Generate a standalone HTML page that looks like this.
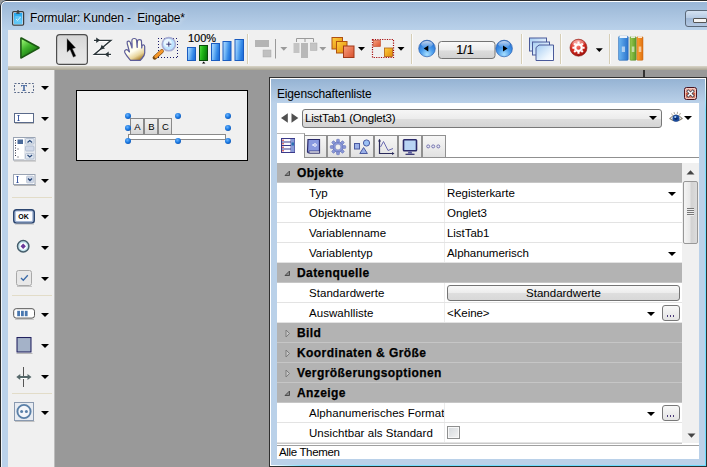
<!DOCTYPE html>
<html>
<head>
<meta charset="utf-8">
<title>Formular</title>
<style>
*{box-sizing:border-box;margin:0;padding:0}
html,body{width:707px;height:467px;overflow:hidden;background:#999;font-family:"Liberation Sans",sans-serif;font-size:12px;color:#000}
.abs{position:absolute}
#win{position:absolute;left:0;top:0;width:720px;height:480px;background:#bbd2ea;overflow:hidden;border-top-left-radius:6px}
#winb{position:absolute;left:0;top:0;width:720px;height:480px;border:1px solid #2a2a2a;border-top-left-radius:6px;box-shadow:inset 0 1px 0 #ffffff,inset 1px 0 0 #f0f5fa;z-index:5}
#titlebar{position:absolute;left:0;top:0;width:707px;height:30px;background:linear-gradient(#97b4d5 0,#a4bfdc 35%,#b0c9e4 70%,#b9d1ea 100%)}
#tb{position:absolute;left:8px;top:30px;width:699px;height:36px;background:#f0f0f0}
#tbshadow{position:absolute;left:8px;top:66px;width:699px;height:4px;background:linear-gradient(#d9d5c8,#a9a595)}
#ltb{position:absolute;left:8px;top:70px;width:46px;height:397px;background:#f0f0f0}
#ltbedge{position:absolute;left:54px;top:70px;width:2px;height:397px;background:linear-gradient(90deg,#bcbcbc 50%,#8e8e8e 50%)}
#canvas{position:absolute;left:55px;top:70px;width:652px;height:397px;background:#999}
.tri{position:absolute;width:0;height:0;border-left:4px solid transparent;border-right:4px solid transparent;border-top:4px solid #000}
.tris{position:absolute;width:0;height:0;border-left:4.1px solid transparent;border-right:4.1px solid transparent;border-top:4.5px solid #000}
.vsep{position:absolute;top:34px;width:2px;height:30px;background:linear-gradient(90deg,#d6ceb6 50%,#fbfbfb 50%)}
.hsep{position:absolute;left:12px;width:40px;height:1px;background:#e2dcc8}
/* panel */
#panel{position:absolute;left:269px;top:77px;width:438px;height:390px;background:#303030;}
#panel .in{position:absolute;left:1px;top:1px;right:1px;bottom:1px;background:#fff}
#panel .blue{position:absolute;left:2px;top:2px;right:2px;bottom:2px;background:#bad1e9}
#ptitle{position:absolute;left:2px;top:2px;right:2px;height:24px;background:linear-gradient(#95b3d3,#a8c2de 50%,#bad1e9)}
#pcontent{position:absolute;left:8px;top:26px;width:422px;height:356px;background:#fff}
.hdr{position:absolute;left:0;width:405px;height:20px;background:#b3b3b3;border-bottom:1px solid #c6c6c6;font-weight:bold;font-size:12px;line-height:21px;padding-left:20px;letter-spacing:0.42px;-webkit-text-stroke:0.25px #000}
.row{position:absolute;left:0;width:405px;height:20px;border-bottom:1px solid #e3e3e3;background:#fff;line-height:19px;font-size:11.5px}
.row .l{position:absolute;left:32px;top:1px;white-space:nowrap;letter-spacing:0.05px}
.row .v{position:absolute;left:170px;top:1px;white-space:nowrap;letter-spacing:-0.05px}
.row .vs{position:absolute;left:167px;top:0;width:1px;height:19px;background:#ececec}

.dots{position:absolute;left:385px;top:2px;width:18px;height:16px;border:1px solid #787878;border-radius:3px;background:linear-gradient(#f8f8f8,#e4e4e4)}
.dots i{position:absolute;top:9.400px;width:1.300px;height:1.400px;background:#4a3a7a}
.dots i:nth-child(1){left:4px}.dots i:nth-child(2){left:7px}.dots i:nth-child(3){left:10px}
.sbtn{position:absolute;left:170px;top:2px;width:233px;height:16px;border:1px solid #747474;border-radius:3px;background:linear-gradient(#f8f8f8,#ececec 50%,#dedede 52%,#d8d8d8);text-align:center;line-height:14px;font-size:11.5px}
.cbx{position:absolute;left:170px;top:3px;width:13px;height:13px;border:1px solid #8e8f8f;background:linear-gradient(135deg,#d4d8dc,#f4f4f4);box-shadow:inset 0 0 0 1px #f8f8f8}
</style>
</head>
<body>
<div id="win">
  <div id="titlebar"></div>
  <div id="winb"></div>
  
  <!-- title icon -->
  <svg class="abs" style="left:11px;top:9px" width="15" height="18" viewBox="11 9 15 18">
    <defs><linearGradient id="clipb" x1="0" y1="0" x2="0" y2="1"><stop offset="0" stop-color="#22a4ec"/><stop offset="1" stop-color="#66ccf8"/></linearGradient></defs>
    <rect x="12.600" y="11.600" width="11" height="13.600" rx="1.200" fill="#cfe0f2" stroke="#3c3c3c" stroke-width="1.200"/>
    <rect x="14" y="13" width="8.300" height="11.200" fill="url(#clipb)"/>
    <rect x="15.200" y="16" width="5.800" height="6" fill="#7ad0f8" opacity="0.6"/>
    <path d="M17.300 10h1.400v2.600h1v1.200h-3.400v-1.200h1z" fill="#3c3c3c"/>
    <path d="M16 19l1.500 1.500L20.500 17" stroke="#d8f0fc" fill="none" stroke-width="0.900"/>
  </svg>
  <div class="abs" id="ttext" style="left:30px;top:10px;font-size:12px;line-height:16px;white-space:nowrap;letter-spacing:-0.14px;text-shadow:0 0 5px rgba(255,255,255,0.8),0 0 8px rgba(255,255,255,0.5)">Formular: Kunden -&nbsp; Eingabe*</div>
  <!-- minimize btn -->
  <div class="abs" style="left:685px;top:10px;width:30px;height:17px;border:1px solid #5a6878;border-radius:3px;background:linear-gradient(#d4e2f2,#b8cce4 45%,#9fb8d6 50%,#b4c8e2)"></div>
  <div class="abs" style="left:693px;top:18px;width:14px;height:5px;border:1px solid #555;background:#f4f4f4;border-radius:1px"></div>

  <div id="tb"></div>
  <div id="tbshadow"></div>
  <div id="ltb"></div>
  <div id="ltbedge"></div>
  <div id="canvas"></div>
  <div class="abs" style="left:643px;top:70px;width:2px;height:8px;background:#333"></div>

  <!-- TOP TOOLBAR ICONS -->
  <div id="topicons">
<svg class="abs" style="left:0;top:30px" width="707" height="40" viewBox="0 30 707 40">
<defs>
<linearGradient id="gplay" x1="0" y1="0.1" x2="0.6" y2="1"><stop offset="0" stop-color="#90f06c"/><stop offset="0.45" stop-color="#40b42c"/><stop offset="1" stop-color="#14700c"/></linearGradient>
<linearGradient id="gbar" x1="0" y1="0" x2="1" y2="0.3"><stop offset="0" stop-color="#b8e0ff"/><stop offset="0.4" stop-color="#78baf8"/><stop offset="0.75" stop-color="#3a8ee8"/><stop offset="1" stop-color="#2474dc"/></linearGradient>
<linearGradient id="gbarg" x1="0" y1="0" x2="1" y2="0.3"><stop offset="0" stop-color="#5ce048"/><stop offset="0.45" stop-color="#22b818"/><stop offset="1" stop-color="#0a800a"/></linearGradient>
<radialGradient id="gball" cx="0.5" cy="0.85" r="0.85"><stop offset="0" stop-color="#a8e0ff"/><stop offset="0.45" stop-color="#4a9cec"/><stop offset="0.8" stop-color="#2a78d8"/><stop offset="1" stop-color="#1a58b0"/></radialGradient><linearGradient id="gloss" x1="0" y1="0" x2="0" y2="1"><stop offset="0" stop-color="#fff" stop-opacity="0.75"/><stop offset="1" stop-color="#fff" stop-opacity="0.05"/></linearGradient>
<radialGradient id="gred" cx="0.4" cy="0.3" r="0.8"><stop offset="0" stop-color="#ff9a90"/><stop offset="0.5" stop-color="#d82a20"/><stop offset="1" stop-color="#8a0a08"/></radialGradient>
<linearGradient id="gor" x1="0" y1="0" x2="1" y2="1"><stop offset="0" stop-color="#ffd040"/><stop offset="1" stop-color="#e08808"/></linearGradient>
<linearGradient id="gor2" x1="0" y1="0" x2="1" y2="1"><stop offset="0" stop-color="#f8a080"/><stop offset="1" stop-color="#d8502c"/></linearGradient>
<linearGradient id="gwin" x1="0" y1="0" x2="1" y2="1"><stop offset="0" stop-color="#a4ccf2"/><stop offset="0.7" stop-color="#eef6fe"/><stop offset="1" stop-color="#ffffff"/></linearGradient>
<linearGradient id="gbtn" x1="0" y1="0" x2="0" y2="1"><stop offset="0" stop-color="#d6d6d6"/><stop offset="0.45" stop-color="#e0e0e0"/><stop offset="0.5" stop-color="#e2e2e2"/><stop offset="1" stop-color="#e8e8e8"/></linearGradient>
<linearGradient id="gpg" x1="0" y1="0" x2="0" y2="1"><stop offset="0" stop-color="#fafafa"/><stop offset="0.5" stop-color="#ececec"/><stop offset="0.55" stop-color="#dcdcdc"/><stop offset="1" stop-color="#d0d0d0"/></linearGradient>
<linearGradient id="ghand" x1="0.2" y1="0" x2="0.7" y2="1"><stop offset="0" stop-color="#ffffe8"/><stop offset="0.55" stop-color="#fffef0"/><stop offset="0.8" stop-color="#e8d49a"/><stop offset="1" stop-color="#a87c28"/></linearGradient>
<linearGradient id="gbk1" x1="0" y1="0" x2="1" y2="0"><stop offset="0" stop-color="#6cb6f2"/><stop offset="1" stop-color="#2a72cc"/></linearGradient><linearGradient id="gbk2" x1="0" y1="0" x2="1" y2="0"><stop offset="0" stop-color="#9ccc50"/><stop offset="1" stop-color="#5c9828"/></linearGradient><linearGradient id="gbk3" x1="0" y1="0" x2="1" y2="0"><stop offset="0" stop-color="#fca030"/><stop offset="1" stop-color="#e07010"/></linearGradient>
</defs>
<!-- play -->
<path d="M21.200 38.300L38.700 47.700L21.200 57.600z" fill="url(#gplay)" stroke="#1c5a14" stroke-width="2.200" stroke-linejoin="round"/>
<path d="M21.700 39.200L37.600 47.700L21.700 56.700z" fill="url(#gplay)"/>
<!-- selected btn -->
<rect x="56.600" y="34.600" width="30.800" height="29.800" rx="3.200" fill="url(#gbtn)" stroke="#4e4e4e" stroke-width="1.200"/>
<path d="M67 38.600L67 52.200L70 49.600L73.300 57.200L75.900 56L72.500 48.700L75.600 47.800Z" fill="#000" stroke="#777" stroke-width="0.400"/>
<!-- Z -->
<g stroke="#fff" stroke-width="3.200" fill="none" opacity="0.85" stroke-linejoin="round"><path d="M94 40.300h17L94.300 54.400H111"/></g>
<g stroke="#2a3438" stroke-width="1.300" fill="none"><path d="M94 40.300h17L94.300 54.400H111"/></g>
<path d="M96.200 37.500l3.900 2.800-3.900 2.800zM108.700 51.600l-3.900 2.800 3.900 2.800zM99.900 49.700L105 48.600L101.700 44.800Z" fill="#2a3438"/>
<!-- hand -->
<path d="M130.500 60.300L140.300 60.300C142 58 144.700 56.500 144.700 53L144.700 46.500C144.700 44.500 142.300 44.500 142 46L141.700 48L141.500 41.500C141.500 39 137.500 39 137.400 41.500L137.200 47.500L136.600 40.500C136.500 37.800 132 37.800 131.900 40.500L132 48L130.300 42.500C129.500 40 126.500 41 127.200 43.500L129.500 52L128 50.300C126.500 48.800 123.800 50 124.800 52.500C126 55 128.500 58 130.500 60.300Z" fill="url(#ghand)" stroke="#5c5c98" stroke-width="1.200" stroke-linejoin="round"/>
<path d="M132 47.500v-4M137.200 47v-4M141.700 47.500v-2" stroke="#7a7ab0" stroke-width="0.800" fill="none"/>
<!-- magnifier -->
<path d="M158 38.500H178M158 57.500H178" stroke="#1a1a6a" stroke-width="1" stroke-dasharray="1 2" fill="none"/><path d="M158.500 41V57M177.500 41V57" stroke="#1a1a6a" stroke-width="1" stroke-dasharray="1 2" fill="none"/>
<path d="M154.600 57.700l7.200-6.500" stroke="#7a4a10" stroke-width="4" stroke-linecap="round"/>
<path d="M155.800 56.600l6-5.400" stroke="#f4962a" stroke-width="3" stroke-linecap="round"/>
<circle cx="168.800" cy="44.200" r="6.600" fill="#bfe4ff" stroke="#a8aed4" stroke-width="1.600"/>
<circle cx="167.800" cy="43" r="4" fill="#f0f9ff" opacity="0.85"/>
<path d="M166.300 44.200h5M168.800 41.700v5" stroke="#2a2a6a" stroke-width="0.900"/>
<!-- bars -->
<rect x="187.500" y="47.500" width="8" height="13" fill="url(#gbar)" stroke="#1a5cc0"/>
<rect x="199.500" y="45.500" width="8" height="15" fill="url(#gbarg)" stroke="#0a4a0a"/>
<rect x="211.500" y="43.500" width="8" height="17" fill="url(#gbar)" stroke="#1a5cc0"/>
<rect x="223" y="41.500" width="8" height="19" fill="url(#gbar)" stroke="#1a5cc0"/>
<rect x="235" y="39.500" width="8.500" height="21" fill="url(#gbar)" stroke="#1a5cc0"/>
<path d="M202 63.500l1.700-2 1.700 2z" fill="#000"/>
<!-- gray icon1 -->
<rect x="255" y="40" width="14" height="7" fill="#b4b4b4"/><rect x="263" y="50" width="8" height="7" fill="#c0c0c0" stroke="#aaa" stroke-width="0.5"/>
<path d="M275.500 39v19.500" stroke="#9a9a9a" stroke-width="1"/>
<path d="M280.300 47h7l-3.500 3.800z" fill="#9a9a9a"/>
<!-- gray icon2 -->
<path d="M296.500 42v-3.500h17V42M305 38.500V42" stroke="#9a9a9a" fill="none"/>
<rect x="293.500" y="43" width="6" height="10" fill="#c4c4c4"/><rect x="301" y="43" width="7" height="15" fill="#b8b8b8"/><rect x="310.500" y="43" width="6.500" height="7.500" fill="#c4c4c4" stroke="#aaa" stroke-width="0.5"/>
<path d="M319.300 47h7l-3.500 3.800z" fill="#9a9a9a"/>
<!-- orange stack -->
<rect x="332" y="37.500" width="10.500" height="11.500" fill="url(#gor)" stroke="#b05010"/>
<rect x="336.500" y="41.500" width="10.500" height="11.500" fill="url(#gor)" stroke="#b05010"/>
<rect x="343.500" y="46" width="10.500" height="11.500" fill="url(#gor2)" stroke="#a03818"/>
<path d="M358 47h7l-3.500 3.800z" fill="#000"/>
<!-- dotted rect -->
<rect x="372.500" y="39.500" width="21" height="18" fill="none" stroke="#a80c0c" stroke-width="1.200" stroke-dasharray="1.200 1.200"/>
<rect x="373.500" y="40.500" width="7" height="6" fill="url(#gor2)" stroke="#c04828" stroke-width="0.6"/>
<rect x="384.500" y="48" width="8" height="8.500" fill="url(#gor)" stroke="#b06010" stroke-width="0.8"/>
<path d="M397.500 47h7l-3.500 3.800z" fill="#000"/>
<!-- nav -->
<circle cx="427" cy="48.500" r="8.300" fill="url(#gball)" stroke="#2a60b0" stroke-width="0.700"/>
<ellipse cx="427" cy="44.300" rx="5.800" ry="3.300" fill="url(#gloss)"/>
<path d="M428.300 45.500v6l-4.600-3z" fill="#000"/>
<rect x="438.500" y="41.500" width="56.500" height="17" rx="3" fill="url(#gpg)" stroke="#747474"/>
<circle cx="504.100" cy="48.500" r="8.300" fill="url(#gball)" stroke="#2a60b0" stroke-width="0.700"/>
<ellipse cx="504.100" cy="44.300" rx="5.800" ry="3.300" fill="url(#gloss)"/>
<path d="M503 45.500v6l4.600-3z" fill="#000"/>
<!-- windows -->
<rect x="529.500" y="38" width="17" height="13" fill="url(#gwin)" stroke="#4a5a9a"/>
<rect x="532.500" y="42" width="17" height="13" fill="url(#gwin)" stroke="#4a5a9a"/>
<path d="M536 47.500l3-2.500h14.500v15.500H536z" fill="url(#gwin)" stroke="#4a5a9a"/>
<!-- gear -->
<circle cx="578.500" cy="47.700" r="8.500" fill="url(#gred)" stroke="#8a1a10" stroke-width="0.600"/>
<ellipse cx="578.500" cy="43.300" rx="6" ry="3.300" fill="url(#gloss)" opacity="0.6"/>
<circle cx="578.500" cy="47.700" r="3.300" fill="none" stroke="#fff" stroke-width="2.300"/>
<path d="M582.70 47.70L584.60 47.70M581.47 50.67L582.81 52.01M578.50 51.90L578.50 53.80M575.53 50.67L574.19 52.01M574.30 47.70L572.40 47.70M575.53 44.73L574.19 43.39M578.50 43.50L578.50 41.60M581.47 44.73L582.81 43.39" stroke="#fff" stroke-width="2.100"/>
<path d="M595.800 48.300h7l-3.500 3.800z" fill="#000"/>
<!-- books -->
<rect x="618.600" y="36.300" width="9.600" height="24" rx="1" fill="url(#gbk1)" stroke="#2464b4" stroke-width="0.600"/>
<rect x="619.600" y="36" width="7.600" height="2" fill="#eef4fc"/>
<rect x="630" y="36.800" width="6.200" height="23.500" rx="0.800" fill="url(#gbk2)" stroke="#4c8420" stroke-width="0.500"/>
<rect x="636.900" y="36.800" width="6.100" height="23.500" rx="0.800" fill="url(#gbk3)" stroke="#c46410" stroke-width="0.500"/>
<rect x="631" y="36.300" width="4.200" height="1.600" fill="#f0f4e8"/><rect x="637.900" y="36.300" width="4.100" height="1.600" fill="#fcf0e4"/>
<path d="M621.800 46.500h3.200v5.500h-3.200zM631.800 46.500h2.600v5.500h-2.600zM638.700 46.500h2.600v5.500h-2.600z" fill="#fff" opacity="0.55"/>
</svg>
<div class="vsep" style="left:247px"></div>
<div class="vsep" style="left:411px"></div>
<div class="vsep" style="left:521px"></div>
<div class="vsep" style="left:560px"></div>
<div class="vsep" style="left:609px"></div>
<div class="abs" style="left:188px;top:32px;font-size:11px;line-height:12px;letter-spacing:0px;white-space:nowrap;-webkit-text-stroke:0.15px #000" id="pct">100%</div>
<div class="abs" style="left:437px;top:42px;width:56px;text-align:center;font-size:12.5px;line-height:16px;-webkit-text-stroke:0.2px #000">1/1</div>
</div><!--/top-->

  <!-- LEFT TOOLBAR ICONS -->
  <div id="lefticons">
<svg class="abs" style="left:8px;top:70px" width="46" height="397" viewBox="8 70 46 397">
<defs>
<linearGradient id="lgb" x1="0" y1="0" x2="0" y2="1"><stop offset="0" stop-color="#ffffff"/><stop offset="1" stop-color="#dfe4ec"/></linearGradient>
<radialGradient id="lrad" cx="0.5" cy="0.5" r="0.5"><stop offset="0" stop-color="#fff"/><stop offset="0.6" stop-color="#e0e6ee"/><stop offset="1" stop-color="#8a9ab0"/></radialGradient>
</defs>
<!-- 1 static text -->
<rect x="14.500" y="83.500" width="19" height="9" fill="none" stroke="#5a6a8a" stroke-width="1" stroke-dasharray="2 1.500"/>
<path d="M21 85h6v1.500h-.8l-.4-.7h-1v4.400h.9v.8h-3.400v-.8h.9v-4.400h-1l-.4.700H21z" fill="#4a6aa0"/>
<!-- 2 entry -->
<rect x="14.500" y="113.500" width="19" height="9" fill="#fff" stroke="#5a6a8a" stroke-width="1"/>
<path d="M15 123.500h19" stroke="#b8b8b8" stroke-width="1"/>
<path d="M17.500 115.500h2M17.500 120.500h2M18.500 115.500v5" stroke="#2a4a9a" stroke-width="0.9" fill="none"/>
<!-- 3 listbox -->
<rect x="13.500" y="137.500" width="21.500" height="22.500" fill="#fff" stroke="#9aa4b4" stroke-width="1"/>
<path d="M14 161h22" stroke="#b4b4b4"/>
<rect x="24" y="138" width="11" height="22" fill="#e4e8ee"/>
<rect x="17.500" y="139.500" width="5.500" height="4.500" fill="#4a6a9a"/>
<path d="M15.500 140v17.500" stroke="#334" stroke-width="1" stroke-dasharray="1 1.500"/>
<path d="M17.500 149h1M17.500 157h1" stroke="#334"/>
<rect x="25.500" y="138.500" width="8.500" height="5.500" rx="1" fill="#dfe6f0" stroke="#a8b4c8" stroke-width="0.7"/>
<rect x="25.500" y="146" width="8.500" height="5" rx="1" fill="#d0d8e8" stroke="#a8b4c8" stroke-width="0.7"/>
<rect x="25.500" y="153.500" width="8.500" height="5.500" rx="1" fill="#dfe6f0" stroke="#a8b4c8" stroke-width="0.7"/>
<path d="M27.500 142.500l2.300-2 2.300 2M27.500 155l2.300 2 2.300-2" stroke="#2a4a7a" stroke-width="1.200" fill="none"/>
<!-- 4 combo -->
<rect x="13.500" y="174.500" width="21.500" height="10" fill="#fff" stroke="#9aa4b4" stroke-width="1"/>
<path d="M14 185.500h22" stroke="#b4b4b4"/>
<path d="M16.500 176.500h2M16.500 182.500h2M17.500 176.500v6" stroke="#2a4a9a" stroke-width="0.9" fill="none"/>
<rect x="26.500" y="176" width="7" height="7" rx="1" fill="#d0d8e8" stroke="#b0bccc" stroke-width="0.6"/>
<path d="M28 178.500l2 2 2-2" stroke="#2a4a7a" stroke-width="1.300" fill="none"/>
<!-- 5 OK -->
<rect x="13.700" y="209.700" width="20.600" height="13.400" rx="2.800" fill="#a4b6d4" stroke="#2c4670" stroke-width="1.400"/>
<rect x="15.800" y="211.600" width="16.400" height="9.400" rx="0.800" fill="#fbfcfe"/>
<path d="M15 224.300h19" stroke="#cccccc"/>
<!-- 6 radio -->
<circle cx="23.200" cy="246.200" r="5.700" fill="#c4e4ee" stroke="#465e6c" stroke-width="1.500"/>
<circle cx="23.200" cy="246.200" r="3.500" fill="#fff"/>
<path d="M23.200 243.500l2.700 2.700-2.700 2.700-2.700-2.700z" fill="#6a3a9a"/>
<!-- 7 checkbox -->
<rect x="16.500" y="270.500" width="15" height="15" rx="2" fill="#e8e8e8" stroke="#a8a8a8" stroke-width="1"/>
<path d="M17 286.500h15" stroke="#c4c4c4"/>
<path d="M21 278l2.300 2.300 4.500-5" stroke="#3a6aa8" stroke-width="1.300" fill="none"/>
<!-- 8 progress -->
<rect x="13.700" y="308.700" width="20.800" height="9.400" rx="2.500" fill="#fff" stroke="#555" stroke-width="1"/>
<path d="M15 319.500h19" stroke="#c8c8c8"/>
<rect x="17.200" y="310.800" width="2.800" height="5.400" fill="#4a78b0"/><rect x="21" y="310.800" width="2.800" height="5.400" fill="#4a78b0"/><rect x="24.800" y="310.800" width="2.800" height="5.400" fill="#4a78b0"/>
<!-- 9 square -->
<rect x="16" y="336.500" width="16" height="16.500" fill="#fff"/>
<rect x="17" y="337.500" width="14" height="14.500" fill="#a4b2c8" stroke="#22225e" stroke-width="1.100"/>
<path d="M16.500 353.500h16" stroke="#b8b8b8"/>
<!-- 10 splitter -->
<path d="M23.500 367v20" stroke="#555" stroke-width="1"/>
<path d="M18.500 378.200h10" stroke="#fff" stroke-width="1.600"/><path d="M18.500 377h10" stroke="#56686a" stroke-width="2"/>
<path d="M16.300 377l4-3v6zM31.500 377l-4-3v6z" fill="#56686a"/>
<!-- 11 plugin -->
<rect x="14.500" y="402.500" width="19" height="18" fill="#e8ecf2" stroke="#8a9ab0" stroke-width="1"/>
<path d="M15 421.500h19.500" stroke="#c0c0c0"/>
<circle cx="24" cy="411.500" r="6.600" fill="#f4f6fa" stroke="#5a80a8" stroke-width="1.900"/>
<circle cx="21.600" cy="411.500" r="1.500" fill="#5a80a8"/><circle cx="26.400" cy="411.500" r="1.500" fill="#5a80a8"/>
</svg>
<div class="abs" style="left:14px;top:210px;width:19px;height:13px;line-height:13px;text-align:center;font-size:7px;font-weight:bold;letter-spacing:0px">OK</div>
<div class="tri" style="left:41px;top:86px"></div>
<div class="tri" style="left:41px;top:117px"></div>
<div class="tri" style="left:41px;top:148px"></div>
<div class="tri" style="left:41px;top:179px"></div>
<div class="tri" style="left:41px;top:215px"></div>
<div class="tri" style="left:41px;top:246px"></div>
<div class="tri" style="left:41px;top:277px"></div>
<div class="tri" style="left:41px;top:313px"></div>
<div class="tri" style="left:41px;top:344px"></div>
<div class="tri" style="left:41px;top:375px"></div>
<div class="tri" style="left:41px;top:411px"></div>
<div class="hsep" style="top:197px"></div>
<div class="hsep" style="top:295px"></div>
<div class="hsep" style="top:393px"></div>
</div><!--/left-->

  <!-- FORM -->
  <div class="abs" style="left:76px;top:90px;width:172px;height:71px;border:1px solid #000;background:#f0f0f0"></div>
  <div id="formobj">
<svg class="abs" style="left:120px;top:110px" width="115" height="36" viewBox="120 110 115 36">
<defs><radialGradient id="hnd" cx="0.4" cy="0.35" r="0.7"><stop offset="0" stop-color="#6ab4ff"/><stop offset="0.6" stop-color="#1a78e0"/><stop offset="1" stop-color="#0a50b0"/></radialGradient>
<linearGradient id="tabg" x1="0" y1="0" x2="0" y2="1"><stop offset="0" stop-color="#f0f0f0"/><stop offset="0.5" stop-color="#e8e8e8"/><stop offset="1" stop-color="#d4d4d4"/></linearGradient></defs>
<rect x="130.500" y="118.500" width="13" height="16" fill="url(#tabg)" stroke="#8a8a8a"/>
<rect x="144.500" y="118.500" width="13" height="16" fill="url(#tabg)" stroke="#8a8a8a"/>
<rect x="158.500" y="118.500" width="13" height="16" fill="url(#tabg)" stroke="#8a8a8a"/>
<rect x="128.500" y="134.500" width="97" height="5" fill="#fff" stroke="#8a8a8a"/>
<circle cx="128" cy="116" r="3" fill="url(#hnd)"/><circle cx="178" cy="116" r="3" fill="url(#hnd)"/><circle cx="228" cy="116" r="3" fill="url(#hnd)"/><circle cx="128" cy="128" r="3" fill="url(#hnd)"/><circle cx="228" cy="128" r="3" fill="url(#hnd)"/><circle cx="128" cy="141" r="3" fill="url(#hnd)"/><circle cx="178" cy="141" r="3" fill="url(#hnd)"/><circle cx="228" cy="141" r="3" fill="url(#hnd)"/></svg>
<div class="abs" style="left:131px;top:120px;width:13px;text-align:center;font-size:9.5px;line-height:14px">A</div>
<div class="abs" style="left:145px;top:120px;width:13px;text-align:center;font-size:9.5px;line-height:14px">B</div>
<div class="abs" style="left:159px;top:120px;width:13px;text-align:center;font-size:9.5px;line-height:14px">C</div>
</div><!--/form-->

  <!-- PANEL -->
  <div id="panel">
    <div class="in"></div>
    <div class="abs" style="right:1px;top:3px;width:1px;bottom:1px;background:linear-gradient(#ffffff,#7ae0ff 30px,#6adcff)"></div>
    <div class="abs" style="left:3px;right:1px;bottom:1px;height:1px;background:linear-gradient(90deg,#ffffff,#7ae0ff 30px,#6adcff)"></div>
    <div class="blue"></div>
    <div id="ptitle"></div>
    <div class="abs" id="pttext" style="left:8px;top:10px;font-size:12px;line-height:15px;white-space:nowrap;letter-spacing:-0.16px">Eigenschaftenliste</div>
    <div class="abs" style="left:415px;top:10px;width:13px;height:13px;border:1px solid #4a1420;border-radius:2.500px;background:linear-gradient(#eeb0a4,#e49888 45%,#c85a40 50%,#d87a64 80%,#e6a090);box-shadow:inset 0 0 0 1px rgba(250,215,205,0.75)"></div>
    <svg class="abs" style="left:417px;top:12px" width="9" height="9" viewBox="0 0 9 9"><path d="M2.300 2.300l4.400 4.400M6.700 2.300l-4.400 4.400" stroke="#3a3a4a" stroke-width="2.900" stroke-linecap="square"/><path d="M2.300 2.300l4.400 4.400M6.700 2.300l-4.400 4.400" stroke="#fff" stroke-width="1.500" stroke-linecap="square"/></svg>
    <div id="pcontent">
<svg class="abs" style="left:3px;top:10px" width="20" height="10" viewBox="0 0 20 10"><path d="M7.800 0.300v9.400L1 5z" fill="#505050"/><path d="M11.500 0.300v9.400L18.300 5z" fill="#505050"/></svg>
<div class="abs" style="left:25px;top:6px;width:360px;height:19px;border:1px solid #787878;border-radius:3px;background:linear-gradient(#f6f6f6,#ececec 50%,#dedede 52%,#d4d4d4)"></div>
<div class="abs" id="ddtext" style="left:28px;top:8px;font-size:11.5px;line-height:15px;white-space:nowrap;letter-spacing:-0.2px">ListTab1 (Onglet3)</div>
<div class="tri" style="left:372px;top:13px"></div>
<svg class="abs" style="left:392px;top:7px" width="15" height="14" viewBox="0 0 15 14">
<path d="M0.800 8.500 Q7 1.500 13.200 8.500 Q7 13.500 0.800 8.500z" fill="#fff" stroke="#8a8478" stroke-width="1.100"/>
<circle cx="7" cy="8.300" r="3.500" fill="#1a4a9c"/><circle cx="7" cy="8.300" r="1.600" fill="#0a2a6a"/><circle cx="6.300" cy="7" r="1.100" fill="#a8d0f8"/>
<path d="M2.500 3.500l1.200 2M5 2l.6 2.200M8.500 1.800l-.2 2.200M11.500 3l-1 2" stroke="#9a9488" stroke-width="0.800"/>
</svg>
<div class="tris" style="left:407px;top:13px"></div>
<div class="abs" style="left:27px;top:32px;width:23px;height:23px;border:1px solid #909090;border-bottom:none;background:linear-gradient(#f6f6f6,#ececec 50%,#e0e0e0)"></div>
<div class="abs" style="left:50px;top:32px;width:23px;height:23px;border:1px solid #909090;border-bottom:none;background:linear-gradient(#f6f6f6,#ececec 50%,#e0e0e0)"></div>
<div class="abs" style="left:73px;top:32px;width:24px;height:23px;border:1px solid #909090;border-bottom:none;background:linear-gradient(#f6f6f6,#ececec 50%,#e0e0e0)"></div>
<div class="abs" style="left:97px;top:32px;width:24px;height:23px;border:1px solid #909090;border-bottom:none;background:linear-gradient(#f6f6f6,#ececec 50%,#e0e0e0)"></div>
<div class="abs" style="left:121px;top:32px;width:24px;height:23px;border:1px solid #909090;border-bottom:none;background:linear-gradient(#f6f6f6,#ececec 50%,#e0e0e0)"></div>
<div class="abs" style="left:145px;top:32px;width:24px;height:23px;border:1px solid #909090;border-bottom:none;background:linear-gradient(#f6f6f6,#ececec 50%,#e0e0e0)"></div>
<div class="abs" style="left:27px;top:54px;width:395px;height:1px;background:#909090"></div>
<div class="abs" style="left:0;top:30px;width:28px;height:24px;border-right:1px solid #909090;border-top:1px solid #b8b8b8;background:#fff"></div>
<svg class="abs" style="left:0;top:30px" width="175" height="26" viewBox="277 133 175 26">
<!-- list icon -->
<rect x="281.500" y="138.500" width="13" height="14" fill="#fafaff" stroke="#3a3a8a"/>
<path d="M282 142h9M282 145.500h9M282 149h9" stroke="#3a3a8a" stroke-width="1"/>
<path d="M291 139v13" stroke="#3a3a8a" stroke-width="0.800"/>
<rect x="291" y="139" width="3.500" height="13" fill="#8a9ad8"/>
<rect x="291.500" y="142.500" width="2.500" height="3" fill="#2a70b0"/>
<path d="M283 140.300v0M283 143.800v0M283 147.300v0M283 150.800v0" stroke="#c01818" stroke-width="1.600" stroke-linecap="round"/>
<!-- book -->
<path d="M308 139.500h11.500v13.500h-10.500q-1.500 0-1.500-1.500z" fill="#8a9ae0" stroke="#2a2a6a" stroke-width="1.200"/>
<path d="M309 151h10.500v2h-10q-1-1-.5-2z" fill="#fff" stroke="#2a2a6a" stroke-width="0.700"/>
<circle cx="315" cy="145" r="1.300" fill="none" stroke="#fff" stroke-width="0.900"/><path d="M312 145h2" stroke="#fff" stroke-width="0.900"/>
<!-- gear -->
<g transform="translate(338,147)" fill="#8a98d8" stroke="#5a68b0" stroke-width="0.500">
<circle r="5.200" fill="#8a98d8"/>
<g id="teeth"><rect x="-1.400" y="-7.700" width="2.800" height="3" rx="0.600"/><rect x="-1.400" y="4.700" width="2.800" height="3" rx="0.600"/><rect x="-7.700" y="-1.400" width="3" height="2.800" rx="0.600"/><rect x="4.700" y="-1.400" width="3" height="2.800" rx="0.600"/></g>
<g transform="rotate(45)"><rect x="-1.400" y="-7.700" width="2.800" height="3" rx="0.600"/><rect x="-1.400" y="4.700" width="2.800" height="3" rx="0.600"/><rect x="-7.700" y="-1.400" width="3" height="2.800" rx="0.600"/><rect x="4.700" y="-1.400" width="3" height="2.800" rx="0.600"/></g>
<circle r="2.900" fill="#f0f0f0" stroke="#5a68b0"/>
</g>
<!-- shapes -->
<rect x="354.500" y="143.500" width="5" height="5.500" fill="#9ab0e8" stroke="#4a5aa0"/>
<circle cx="366.500" cy="143" r="3.100" fill="#9ac0f4" stroke="#4a5aa0"/>
<path d="M359.800 153.500l3.800-6 3.800 6z" fill="#9ab0e8" stroke="#4a5aa0"/>
<!-- graph -->
<path d="M379.500 139.500v14h14" stroke="#2a2a5a" stroke-width="1.200" fill="none"/>
<path d="M378 141.500l1.500-2.500 1.500 2.500zM392 152l2.500 1.500-2.500 1.500z" fill="#2a2a5a"/>
<path d="M380.500 147l3-5.500 4.500 9 5-2" stroke="#6a6ab0" stroke-width="1" fill="none"/>
<!-- monitor -->
<rect x="403.500" y="139.700" width="13" height="11" rx="0.800" fill="#b8d4f4" stroke="#2a2a6a" stroke-width="1.600"/>
<path d="M408.500 151.500h3l.8 2h-4.600z" fill="#5a5aa0"/><path d="M405.500 154.300h9" stroke="#2a2a6a" stroke-width="1.200"/>
<!-- dots -->
<g fill="#e8e8f4" stroke="#6a6aa8" stroke-width="0.900"><circle cx="428.200" cy="146.400" r="1.500"/><circle cx="433.200" cy="146.400" r="1.500"/><circle cx="438.300" cy="146.400" r="1.500"/></g>
</svg>
<!--TABICONS-->
<div class="hdr" style="top:60px"><svg class="abs" style="left:7px;top:7px" width="7" height="7" viewBox="0 0 7 7"><path d="M5.5 1v4.5H1z" fill="#8a8a8a" stroke="#444" stroke-width="0.9"/></svg>Objekte</div>
<div class="row" style="top:80px"><span class="l">Typ</span><i class="vs"></i><span class="v">Registerkarte</span><div class="tris" style="left:390.500px;top:9px"></div></div>
<div class="row" style="top:100px"><span class="l">Objektname</span><i class="vs"></i><span class="v">Onglet3</span></div>
<div class="row" style="top:120px"><span class="l">Variablenname</span><i class="vs"></i><span class="v">ListTab1</span></div>
<div class="row" style="top:140px"><span class="l">Variablentyp</span><i class="vs"></i><span class="v">Alphanumerisch</span><div class="tris" style="left:390.500px;top:9px"></div></div>
<div class="hdr" style="top:160px"><svg class="abs" style="left:7px;top:7px" width="7" height="7" viewBox="0 0 7 7"><path d="M5.5 1v4.5H1z" fill="#8a8a8a" stroke="#444" stroke-width="0.9"/></svg>Datenquelle</div>
<div class="row" style="top:180px"><span class="l">Standardwerte</span><i class="vs"></i><span class="v"></span><div class="sbtn">Standardwerte</div></div>
<div class="row" style="top:200px"><span class="l">Auswahlliste</span><i class="vs"></i><span class="v">&lt;Keine&gt;</span><div class="tris" style="left:369.500px;top:9px"></div><div class="dots"><i></i><i></i><i></i></div></div>
<div class="hdr" style="top:220px"><svg class="abs" style="left:8px;top:6px" width="6" height="9" viewBox="0 0 6 9"><path d="M1 1l3.5 3.5L1 8z" fill="#c8c8c8" stroke="#777" stroke-width="0.9"/></svg>Bild</div>
<div class="hdr" style="top:240px"><svg class="abs" style="left:8px;top:6px" width="6" height="9" viewBox="0 0 6 9"><path d="M1 1l3.5 3.5L1 8z" fill="#c8c8c8" stroke="#777" stroke-width="0.9"/></svg>Koordinaten &amp; Größe</div>
<div class="hdr" style="top:260px"><svg class="abs" style="left:8px;top:6px" width="6" height="9" viewBox="0 0 6 9"><path d="M1 1l3.5 3.5L1 8z" fill="#c8c8c8" stroke="#777" stroke-width="0.9"/></svg>Vergrößerungsoptionen</div>
<div class="hdr" style="top:280px"><svg class="abs" style="left:7px;top:7px" width="7" height="7" viewBox="0 0 7 7"><path d="M5.5 1v4.5H1z" fill="#8a8a8a" stroke="#444" stroke-width="0.9"/></svg>Anzeige</div>
<div class="row" style="top:300px"><span class="l">Alphanumerisches Format</span><i class="vs"></i><span class="v"></span><div class="tris" style="left:369.500px;top:9px"></div><div class="dots"><i></i><i></i><i></i></div></div>
<div class="row" style="top:320px"><span class="l">Unsichtbar als Standard</span><i class="vs"></i><span class="v"></span><div class="cbx"></div></div>
<div class="abs" style="left:405px;top:60px;width:17px;height:280px;background:#f0f0f0"></div>
<div class="abs" style="left:406px;top:78px;width:15px;height:63px;border:1px solid #979797;border-radius:2px;background:linear-gradient(90deg,#f4f4f4,#e8e8e8 45%,#d2d2d2 55%,#dcdcdc)"></div>
<div class="abs" style="left:410px;top:105px;width:7px;height:8px;background:repeating-linear-gradient(#777 0,#777 1px,#eee 1px,#eee 2px)"></div>
<svg class="abs" style="left:409px;top:66px" width="9" height="6" viewBox="0 0 9 6"><path d="M0.5 5.5L4.5 1.2 8.5 5.5z" fill="#444"/></svg>
<svg class="abs" style="left:410px;top:330px" width="9" height="6" viewBox="0 0 9 6"><path d="M0.5 0.5L4.5 4.8 8.5 0.5z" fill="#444"/></svg>
<div class="abs" style="left:0;top:340px;width:405px;height:1px;background:#c8c8c8"></div>
<div class="abs" style="left:0;top:342px;width:422px;height:1px;background:#a0a0a0"></div>
<div class="abs" id="status" style="left:2px;top:343px;font-size:11.5px;line-height:13px;white-space:nowrap;letter-spacing:-0.35px">Alle Themen</div>
</div>
  </div>
</div>
</body>
</html>
